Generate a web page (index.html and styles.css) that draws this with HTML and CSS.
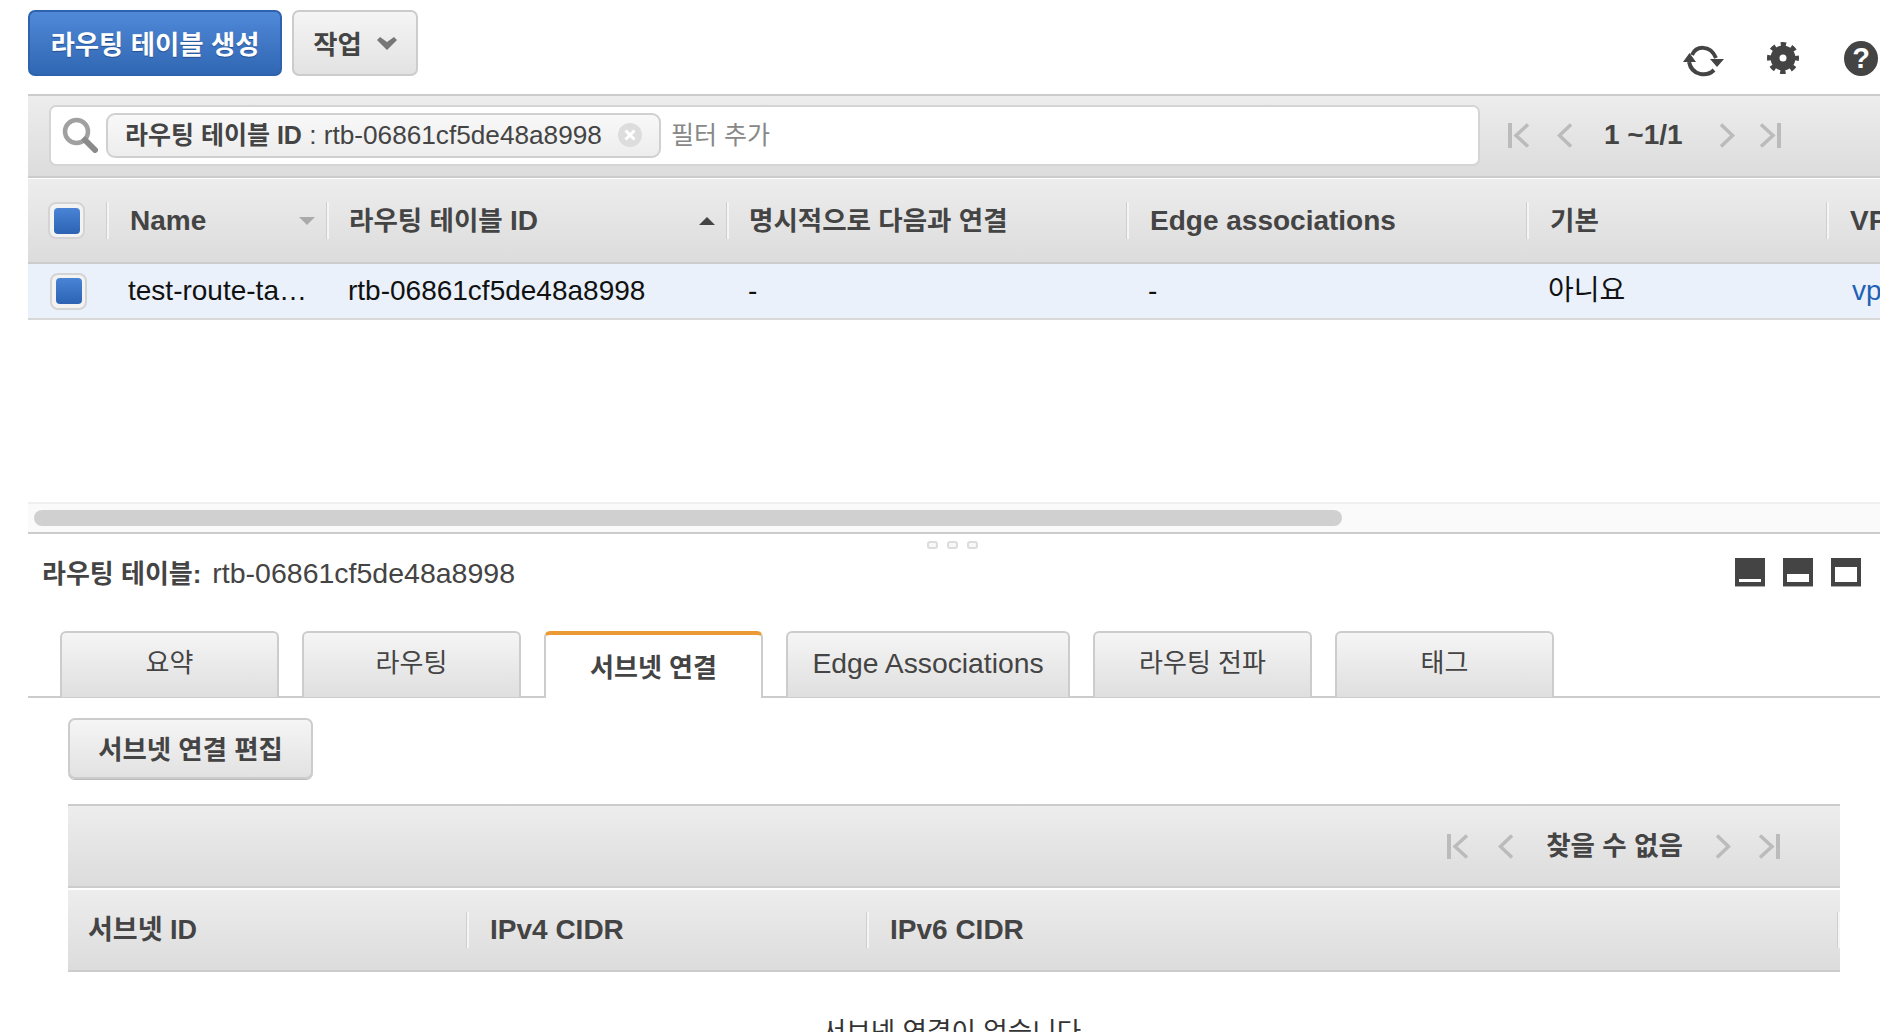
FILE: index.html
```html
<!DOCTYPE html>
<html lang="ko">
<head>
<meta charset="utf-8">
<title>라우팅 테이블</title>
<link rel="stylesheet" href="styles.css">
</head>
<body>
<svg class="defs" width="0" height="0">
  <symbol id="first" viewBox="0 0 22 25"><path d="M2 0v25" stroke-width="4"/><path d="M20 1.500 8 12.500l12 11" stroke-width="3.500"/></symbol>
  <symbol id="prev" viewBox="0 0 15 25"><path d="M14 1.500 2.500 12.500l11.500 11" stroke-width="3.500"/></symbol>
  <symbol id="next" viewBox="0 0 15 25"><path d="M1 1.500l11.500 11L1 23.500" stroke-width="3.500"/></symbol>
  <symbol id="last" viewBox="0 0 22 25"><path d="M2 1.500l12 11-12 11" stroke-width="3.500"/><path d="M20 0v25" stroke-width="4"/></symbol>
</svg>
<main class="page">
  <div class="topbar">
    <button class="btn btn-primary">라우팅 테이블 생성</button>
    <button class="btn btn-default btn-actions"><span>작업</span><svg class="caret" width="20" height="13" viewBox="0 0 20 13"><path d="M0 3 3 0l7 5 7-5 3 3-10 10z" fill="#777"/></svg></button>
    <div class="tools">
      <svg width="42" height="34" viewBox="0 0 42 34" class="tool-refresh"><g fill="none" stroke="#444" stroke-width="4"><path d="M9 12C13 3 27 1 33 15"/><path d="M6 19C9 33 24 34 31 27"/></g><path fill="#444" d="M0 19 6.500 10 13 19zM27 16H41L34 24z"/></svg>
      <svg width="32" height="32" viewBox="0 0 32 32" class="tool-gear"><circle cx="16" cy="16" r="8" fill="none" stroke="#444" stroke-width="9"/><circle cx="16" cy="16" r="13.500" fill="none" stroke="#444" stroke-width="5" stroke-dasharray="5.300 5.300" stroke-dashoffset="2.650"/></svg>
      <span class="tool-help">?</span>
    </div>
  </div>

  <div class="band filter-band">
    <div class="search">
      <svg class="search-icon" width="36" height="36" viewBox="0 0 36 36"><circle cx="14.500" cy="14.500" r="11.500" fill="#fff" stroke="#a0a0a0" stroke-width="4.500"/><path d="M23 23l10 10" stroke="#8a8a8a" stroke-width="6" stroke-linecap="round"/></svg>
      <div class="chip"><span class="chip-text"><b>라우팅 테이블 ID</b> : rtb-06861cf5de48a8998</span><svg class="chip-x" width="24" height="24" viewBox="0 0 24 24"><circle cx="12" cy="12" r="12" fill="#ddd"/><path d="M7.500 7.500l9 9M16.500 7.500l-9 9" stroke="#fff" stroke-width="3"/></svg></div>
      <span class="placeholder">필터 추가</span>
    </div>
    <div class="pager pager-top">
      <svg width="22" height="25"><use href="#first"/></svg>
      <svg width="15" height="25"><use href="#prev"/></svg>
      <b class="pager-text">1 ~1/1</b>
      <svg width="15" height="25"><use href="#next"/></svg>
      <svg width="22" height="25"><use href="#last"/></svg>
    </div>
  </div>

  <div class="table-head band">
    <div class="col col-check"><span class="checkbox"><i></i></span></div>
    <div class="col col-name sep">Name<span class="sort-down"></span></div>
    <div class="col col-w sep ko"><span>라우팅 테이블 <span class="en">ID</span></span><span class="sort-up"></span></div>
    <div class="col col-w sep ko">명시적으로 다음과 연결</div>
    <div class="col col-w sep">Edge associations</div>
    <div class="col col-def sep ko">기본</div>
    <div class="col col-vpc sep">VPC</div>
  </div>
  <div class="table-row">
    <div class="col col-check"><span class="checkbox"><i></i></span></div>
    <div class="col col-name"><span class="ellipsis">test-route-table</span></div>
    <div class="col col-w">rtb-06861cf5de48a8998</div>
    <div class="col col-w">-</div>
    <div class="col col-w">-</div>
    <div class="col col-def">아니요</div>
    <div class="col col-vpc"><a class="link">vpc-0a1b2c3d</a></div>
  </div>
  <div class="table-space"></div>
  <div class="scrollbar"><div class="thumb"></div></div>
  <div class="grip"><i></i><i></i><i></i></div>

  <div class="detail-title">
    <h2 class="title"><b>라우팅 테이블:</b> <span class="title-id">rtb-06861cf5de48a8998</span></h2>
    <div class="win-icons">
      <span class="win win-s"></span>
      <span class="win win-m"></span>
      <span class="win win-l"></span>
    </div>
  </div>

  <div class="tabs">
    <div class="tab">요약</div>
    <div class="tab">라우팅</div>
    <div class="tab active">서브넷 연결</div>
    <div class="tab tab-wide">Edge Associations</div>
    <div class="tab">라우팅 전파</div>
    <div class="tab">태그</div>
  </div>

  <div class="panel">
    <button class="btn btn-default btn-edit">서브넷 연결 편집</button>
    <div class="band sub-pager">
      <div class="pager pager-sub">
        <svg width="22" height="25"><use href="#first"/></svg>
        <svg width="15" height="25"><use href="#prev"/></svg>
        <b class="pager-text">찾을 수 없음</b>
        <svg width="15" height="25"><use href="#next"/></svg>
        <svg width="22" height="25"><use href="#last"/></svg>
      </div>
    </div>
    <div class="band sub-head">
      <div class="sub-col sub-first">서브넷 ID</div>
      <div class="sub-col sep">IPv4 CIDR</div>
      <div class="sub-col sub-last sep">IPv6 CIDR</div>
      <div class="sub-col sub-end sep"></div>
    </div>
    <p class="empty">서브넷 연결이 없습니다</p>
  </div>
</main>
</body>
</html>
```
FILE: styles.css
```css
* { box-sizing: border-box; }
html, body { margin: 0; height: 100%; overflow: hidden; background: #fff; }
body { font-family: "Liberation Sans", "Noto Sans CJK KR", sans-serif; font-size: 28px; line-height: 34px; color: #444; }
.defs { position: absolute; }
symbol { fill: none; stroke: #bbb; }
.page { margin-left: 28px; width: 1852px; }

.topbar { display: flex; align-items: flex-start; height: 94px; padding-top: 10px; }
.btn { font: bold 26.400px/34px "Liberation Sans", "Noto Sans CJK KR", sans-serif; border-radius: 7px; height: 66px; padding: 3px 0 0; cursor: pointer; }
.btn-primary { width: 254px; color: #fff; background: linear-gradient(#4f89d8, #3167b3); border: 2px solid #2e62ae; text-shadow: 0 1px 1px #254f8f; }
.btn-default { color: #444; background: linear-gradient(#f5f5f5, #e2e2e2); border: 2px solid #ccc; }
.btn-actions { width: 126px; margin-left: 10px; display: flex; align-items: center; justify-content: center; gap: 15px; }
.caret { margin-top: -3px; }
.tools { margin-left: auto; display: flex; align-items: flex-start; padding-top: 31px; }
.tool-refresh { margin-top: 2px; margin-right: 42px; }
.tool-gear { margin-top: 1px; margin-right: 45px; }
.tool-help { width: 34px; height: 35px; margin-right: 2px; border-radius: 50%; background: #444; color: #fff; font-weight: bold; font-size: 29px; line-height: 35px; text-align: center; }

.band { background: linear-gradient(#ededed, #dcdcdc); border-top: 2px solid #ccc; border-bottom: 2px solid #ccc; }
.filter-band { height: 84px; display: flex; align-items: center; padding-left: 21px; }
.search { width: 1431px; height: 61px; margin-top: -2px; background: #fff; border: 2px solid #d5d5d5; border-radius: 7px; display: flex; align-items: center; padding-left: 11px; }
.search-icon { margin-right: 8px; flex: none; }
.chip { display: flex; align-items: center; justify-content: space-between; width: 555px; height: 45px; flex: none; padding: 0 17px 0 17px; border: 2px solid #d0d0d0; border-radius: 9px; background: linear-gradient(#f8f8f8, #ededed); white-space: nowrap; font-size: 26.200px; }
.chip b { font-size: 25px; }
.placeholder { margin-left: 10px; color: #888; font-size: 25px; }

.pager { display: flex; align-items: center; }
.pager-top { margin-left: 28px; margin-top: -2px; }
.pager-top svg:nth-child(1) { margin-right: 27px; }
.pager-top .pager-text { width: 148px; padding-left: 32px; font-size: 28px; }
.pager-top svg:nth-child(4) { margin-right: 24px; }
.pager-sub svg:nth-child(1) { margin-right: 29px; }
.pager-sub .pager-text { width: 203px; text-align: center; font-size: 26.500px; }
.pager-sub svg:nth-child(4) { margin-right: 27px; }

.table-head { height: 85px; margin-top: 1px; border-top: 0; display: flex; align-items: center; overflow: hidden; font-weight: bold; font-size: 28px; }
.table-row { height: 56px; background: #eaf1fb; border-bottom: 2px solid #d8d8d8; display: flex; align-items: center; overflow: hidden; color: #111; font-size: 28px; }
.col { flex: none; display: flex; align-items: center; height: 37px; position: relative; padding-left: 21px; white-space: nowrap; }
.ko { font-size: 26.500px; }
.en { font-size: 28px; }
.col-check { width: 79px; padding-left: 20px; }
.col-name { width: 220px; }
.col-w { width: 400px; }
.col-def { width: 300px; }
.col-vpc { width: 100px; }
.table-row .col-vpc { padding-left: 25px; }
.table-head .ko.col-w { padding-left: 20px; }
.sep { border-left: 2px solid #f5f5f5; box-shadow: -1px 0 0 #cfcfcf; }
.checkbox { width: 37px; height: 37px; border: 2px solid #d4d4d4; border-radius: 8px; background: #f3f3f3; display: flex; align-items: center; justify-content: center; }
.table-row .checkbox { margin-left: 2px; }
.checkbox i { width: 26px; height: 26px; border-radius: 4px; background: linear-gradient(#4a84d6, #2c63b3); }
.ellipsis { display: block; overflow: hidden; text-overflow: ellipsis; width: 182px; }
.sort-down, .sort-up { position: absolute; top: 15px; width: 0; height: 0; border-left: 8px solid transparent; border-right: 8px solid transparent; }
.sort-down { right: 12px; border-top: 8px solid #aaa; }
.sort-up { right: 12px; border-bottom: 8px solid #444; }
.link { color: #1f61b5; }

.table-space { height: 182px; }
.scrollbar { height: 32px; background: #fafafa; border-top: 2px solid #efefef; border-bottom: 2px solid #ccc; padding: 6px 0 0 6px; }
.thumb { width: 1308px; height: 16px; border-radius: 8px; background: #d0d0d0; }
.grip { display: flex; justify-content: center; gap: 9px; height: 8px; margin-top: 7px; padding-right: 3px; }
.grip i { width: 11px; height: 8px; border: 2px solid #dcdcdc; border-radius: 3px; background: #f8f8f8; }

.detail-title { display: flex; justify-content: space-between; align-items: center; height: 49px; padding: 0 19px 0 14px; }
.title { margin: 0; font-size: 28.500px; line-height: 34px; font-weight: normal; color: #444; }
.title b { font-size: 26px; }
.title-id { margin-left: 3px; }
.win-icons { display: flex; gap: 18px; margin-top: -2px; }
.win { width: 30px; height: 29px; background: #444; border-bottom: 1px solid #aaa; position: relative; }
.win::after { content: ""; position: absolute; left: 4px; right: 4px; bottom: 4px; background: #fff; }
.win-s::after { height: 3px; }
.win-m::after { height: 8px; }
.win-l::after { height: 15px; }

.tabs { display: flex; gap: 23px; height: 67px; margin-top: 33px; padding-left: 32px; border-bottom: 2px solid #ccc; }
.tab { width: 219px; height: 66px; padding-bottom: 5px; display: flex; align-items: center; justify-content: center; font-size: 26px; color: #444; background: linear-gradient(#f5f5f5, #dfdfdf); border: 2px solid #ccc; border-bottom: 0; border-radius: 6px 6px 0 0; }
.tab-wide { width: 284px; font-size: 28.300px; }
.tab.active { height: 67px; padding-top: 3px; padding-bottom: 0; background: #fff; font-weight: bold; border-top: 4px solid #ec9a36; }

.panel { padding: 20px 40px 0; }
.btn-edit { width: 245px; height: 61px; display: block; box-shadow: 0 1px 0 #bbb; }
.sub-pager { height: 84px; margin-top: 25px; display: flex; justify-content: flex-end; align-items: center; padding-right: 60px; }
.sub-head { height: 82px; margin-top: 2px; border-top: 0; display: flex; align-items: center; font-weight: bold; font-size: 28px; }
.sub-col { height: 36px; display: flex; align-items: center; width: 400px; padding-left: 21px; }
.sub-first { width: 399px; padding-left: 20px; font-size: 27px; }
.sub-last { width: 971px; }
.sub-end { width: 2px; padding: 0; }
.empty { margin: 44px 5px 0 0; text-align: center; font-size: 26.600px; color: #333; line-height: 32px; }
```
